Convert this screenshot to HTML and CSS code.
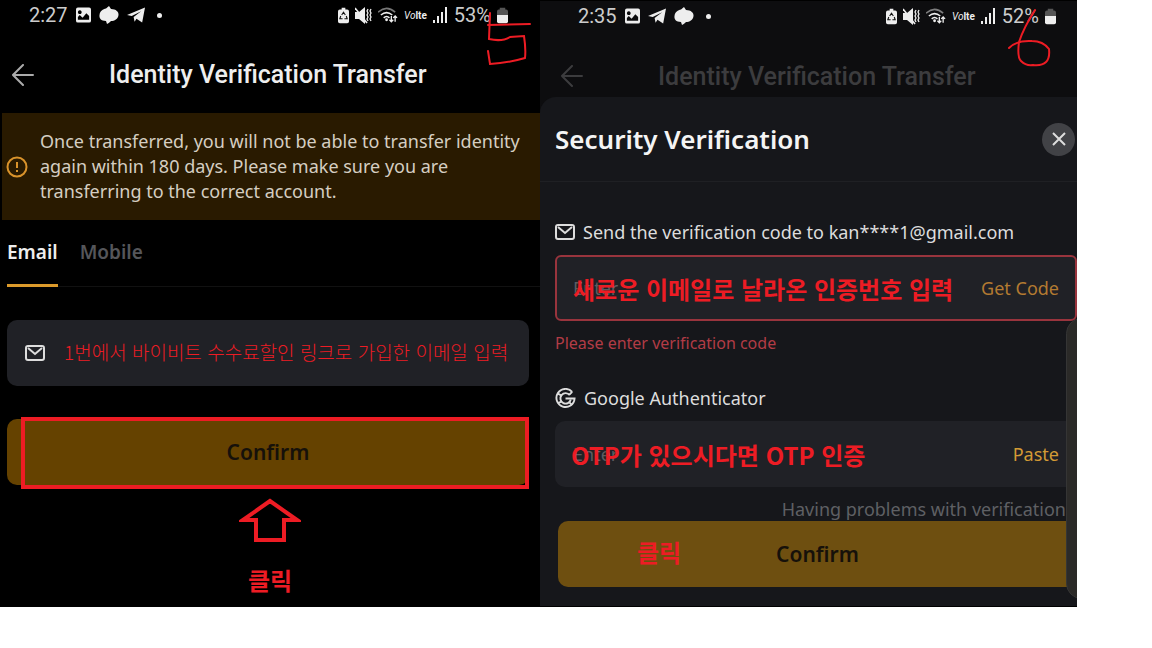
FILE: index.html
```
<!DOCTYPE html>
<html lang="ko">
<head>
  <meta charset="UTF-8" />
  <meta name="viewport" content="width=device-width, initial-scale=1.0"/>
  <title>Identity Verification Transfer</title>
  <link rel="stylesheet" href="styles.css">
</head>
<body>

  <!-- Shared icons -->
  <svg class="sprite" aria-hidden="true">
    <symbol id="picture" viewBox="0 0 16 16">
      <path fill="currentColor" fill-rule="evenodd" d="M2 0h12a2 2 0 0 1 2 2v12a2 2 0 0 1-2 2H2a2 2 0 0 1-2-2V2a2 2 0 0 1 2-2zM2 13h12V9l-3-3-4 5-3-3-2 2zM4 3a2 2 0 1 0 .1 0z"/>
    </symbol>
    <symbol id="blob" viewBox="0 0 20 18">
      <path fill="currentColor" d="M10 0l2 3c5 0 8 3 7.500 6-.5 4-4 6-7.500 6-1 1-2 2-4 3l-1-3C2 15 0 12 .5 9 1 5 4 3 7 2.500z"/>
    </symbol>
    <symbol id="plane" viewBox="0 0 19 16">
      <path fill="currentColor" d="M0 8L19 0l-3 16-6-4-2 3-1-5 8-6-10 5z"/>
    </symbol>
    <symbol id="saver" viewBox="0 0 12 17">
      <path fill="currentColor" d="M4 0h4v2h2a2 2 0 0 1 2 2v11a2 2 0 0 1-2 2H2a2 2 0 0 1-2-2V4a2 2 0 0 1 2-2h2z"/>
      <path fill="none" stroke="#111" stroke-width="1.200" d="M4 8l2-3 2 3M9 9l1 3H7M5 12H2l1-3"/>
    </symbol>
    <symbol id="mute" viewBox="0 0 17 17">
      <path fill="currentColor" d="M0 5h4l6-5v17l-6-5H0z"/>
      <path stroke="currentColor" stroke-width="1.600" d="M0 1l12 15"/>
      <path fill="none" stroke="currentColor" stroke-width="1.300" d="M13 2l-1 2 1 2-1 2 1 2-1 2 1 2M16 2l-1 2 1 2-1 2 1 2-1 2 1 2"/>
    </symbol>
    <symbol id="wifi" viewBox="0 0 21 17">
      <g fill="none" stroke="currentColor" stroke-width="1.600">
        <path stroke-opacity=".5" d="M0 5q9-8 18 0"/>
        <path d="M3 8q6-5 12 0M6 11q3-3 6 0"/>
        <path stroke-width="1.400" d="M14 9v6M12 13l2 2 2-2M18 15V9M16 11l2-2 2 2"/>
      </g>
      <circle cx="9" cy="13" r="1.500" fill="currentColor"/>
    </symbol>
    <symbol id="signal" viewBox="0 0 15 16">
      <path fill="currentColor" d="M0 13h2v3H0zM4 9h2v7H4zM8 5h2v11H8zM12 0h2v16h-2z"/>
    </symbol>
    <symbol id="battery" viewBox="0 0 12 17">
      <path fill="#555" d="M3 0h6v2h1a2 2 0 0 1 2 2v5H0V4a2 2 0 0 1 2-2h1z"/>
      <path fill="currentColor" d="M0 8h12v7a2 2 0 0 1-2 2H2a2 2 0 0 1-2-2z"/>
    </symbol>
    <symbol id="back" viewBox="0 0 22 22">
      <path fill="none" stroke="currentColor" stroke-width="2" stroke-linecap="round" d="M21 11H1M11 1L1 11l10 10"/>
    </symbol>
    <symbol id="mail" viewBox="0 0 20 16">
      <rect x="1" y="1" width="18" height="14" rx="2" fill="none" stroke="currentColor" stroke-width="2"/>
      <path fill="none" stroke="currentColor" stroke-width="2" d="M3 3l7 6 7-6"/>
    </symbol>
  </svg>

  <main class="board">

    <!-- Step 5 -->
    <section class="phone first">
      <div class="status">
        <span class="time">2:27</span>
        <svg class="icon-picture"><use href="#picture"/></svg>
        <svg class="icon-blob"><use href="#blob"/></svg>
        <svg class="icon-plane"><use href="#plane"/></svg>
        <span class="dot"></span>
        <div class="status-right">
          <svg class="icon-saver"><use href="#saver"/></svg>
          <svg class="icon-mute"><use href="#mute"/></svg>
          <svg class="icon-wifi"><use href="#wifi"/></svg>
          <span class="volte"><i>Vo</i>lte</span>
          <svg class="icon-signal"><use href="#signal"/></svg>
          <span class="percent">53%</span>
          <svg class="icon-saver"><use href="#battery"/></svg>
        </div>
      </div>

      <header class="topbar">
        <button class="back" aria-label="Back"><svg><use href="#back"/></svg></button>
        <h1>Identity Verification Transfer</h1>
      </header>

      <div class="notice">
        <svg viewBox="0 0 22 22">
          <circle cx="11" cy="11" r="9.500" fill="none" stroke="#d9932b" stroke-width="2"/>
          <path stroke="#d9932b" stroke-width="2" d="M11 6v6M11 14v2"/>
        </svg>
        <p>Once transferred, you will not be able to transfer identity again within 180 days. Please make sure you are transferring to the correct account.</p>
      </div>

      <nav class="tabs">
        <button class="active">Email</button>
        <button>Mobile</button>
      </nav>

      <div class="field email">
        <svg class="icon-mail"><use href="#mail"/></svg>
        <input type="email" aria-label="Email" />
        <span class="note thin">1번에서 바이비트 수수료할인 링크로 가입한 이메일 입력</span>
      </div>

      <div class="confirm-wrap">
        <button class="confirm">Confirm</button>
        <span class="frame"></span>
      </div>

      <div class="pointer">
        <svg viewBox="0 0 62 46">
          <path fill="none" stroke="#ed1c24" stroke-width="4" d="M31 3L4 22h13v20h28V22h13z"/>
        </svg>
        <span class="mark">클릭</span>
      </div>

      <svg class="number" viewBox="0 0 48 70">
        <path d="M6 13L5 39Q18 42 26 37L40 36Q42 49 41 58Q24 63 6 64L4 51M4 25L46 24"/>
      </svg>
    </section>

    <!-- Step 6 -->
    <section class="phone second">
      <div class="status">
        <span class="time">2:35</span>
        <svg class="icon-picture"><use href="#picture"/></svg>
        <svg class="icon-plane"><use href="#plane"/></svg>
        <svg class="icon-blob"><use href="#blob"/></svg>
        <span class="dot"></span>
        <div class="status-right">
          <svg class="icon-saver"><use href="#saver"/></svg>
          <svg class="icon-mute"><use href="#mute"/></svg>
          <svg class="icon-wifi"><use href="#wifi"/></svg>
          <span class="volte"><i>Vo</i>lte</span>
          <svg class="icon-signal"><use href="#signal"/></svg>
          <span class="percent">52%</span>
          <svg class="icon-saver"><use href="#battery"/></svg>
        </div>
      </div>

      <header class="topbar">
        <button class="back" aria-label="Back"><svg><use href="#back"/></svg></button>
        <h1>Identity Verification Transfer</h1>
      </header>

      <div class="sheet">
        <div class="sheet-head">
          <h2>Security Verification</h2>
          <button class="close" aria-label="Close">
            <svg viewBox="0 0 14 14"><path stroke="currentColor" stroke-width="2" d="M1 1l12 12M13 1L1 13"/></svg>
          </button>
        </div>

        <div class="sheet-body">
          <label class="caption" for="code">
            <svg class="icon-mail"><use href="#mail"/></svg>
            Send the verification code to kan****1@gmail.com
          </label>
          <div class="field error">
            <input type="text" id="code" placeholder="Enter" />
            <button class="link dim">Get Code</button>
            <span class="note">새로운 이메일로 날라온 인증번호 입력</span>
          </div>
          <p class="message">Please enter verification code</p>

          <label class="caption" for="otp">
            <svg class="icon-google" viewBox="0 0 22 22">
              <g fill="none" stroke="currentColor">
                <path stroke-width="2" d="M18 4A9.500 9.500 0 1 0 20.500 11H11"/>
                <path stroke-width="2" d="M15.500 7.500A5.500 5.500 0 1 0 16.500 12"/>
                <path stroke-width="2" d="M3 6l4 2M3 16l4-2M15 15l3 3M18 4l-3 3"/>
              </g>
            </svg>
            Google Authenticator
          </label>
          <div class="field otp">
            <input type="text" id="otp" placeholder="Enter" />
            <button class="link">Paste</button>
            <span class="note">OTP가 있으시다면 OTP 인증</span>
          </div>
          <a class="help" href="#">Having problems with verification</a>
          <div class="confirm-wrap">
            <button class="confirm">Confirm</button>
            <span class="mark">클릭</span>
          </div>
        </div>
      </div>

      <span class="edge-panel"></span>
      <svg class="number" viewBox="0 0 48 70">
        <path d="M30 9Q19 26 14 41Q12 56 16 60Q21 65 28 64Q37 65 41 61Q45 57 44 48Q38 40 27 40Q12 39 4 47"/>
      </svg>
    </section>

  </main>

</body>
</html>
```
FILE: styles.css
```
* {
  box-sizing: border-box;
}

body {
  margin: 0;
  background: #fff;
  font-family: "Noto Sans", "Noto Sans CJK KR", sans-serif;
  color: #ddd;
}

h1, h2, p {
  margin: 0;
}

button, input {
  font: inherit;
  color: inherit;
  background: none;
  border: none;
  padding: 0;
}

button {
  cursor: pointer;
}

svg {
  display: block;
  flex: none;
}

.sprite {
  position: absolute;
  width: 0;
  height: 0;
}

.board {
  display: grid;
  grid-template-columns: 540fr 537fr;
  margin-right: 75px;
  background: #000;
}

.phone {
  position: relative;
  overflow: hidden;
  min-width: 0;
  padding-bottom: 8px;
}

/* Status bar */
.status {
  display: flex;
  align-items: center;
  gap: 8px;
  height: 30px;
  padding: 0 32px 0 29px;
  font-family: Roboto, sans-serif;
  font-size: 20px;
  color: #eee;
}

.time, .percent {
  color: #ccc;
}

.status-right {
  display: flex;
  align-items: center;
  gap: 6px;
  margin-left: auto;
}

.volte {
  font-size: 10px;
  font-weight: bold;
}

.volte i {
  font-weight: normal;
}

.dot {
  width: 5px;
  height: 5px;
  margin-left: 4px;
  border-radius: 50%;
  background: #eee;
}

.icon-picture {
  width: 15px;
  height: 16px;
}

.icon-blob {
  width: 20px;
  height: 18px;
}

.icon-plane {
  width: 18px;
  height: 16px;
}

.icon-saver {
  width: 11px;
  height: 17px;
}

.icon-mute {
  width: 17px;
  height: 17px;
}

.icon-wifi {
  width: 20px;
  height: 17px;
}

.icon-signal {
  width: 15px;
  height: 16px;
}

.icon-mail {
  width: 20px;
  height: 16px;
}

.icon-google {
  width: 21px;
  height: 21px;
}

/* Top bar */
.topbar {
  display: flex;
  align-items: center;
  height: 83px;
  padding: 6px 12px 0;
}

.topbar h1 {
  margin-left: 75px;
  font-family: Roboto, sans-serif;
  font-size: 25px;
  font-weight: 500;
  color: #eee;
  white-space: nowrap;
}

.back {
  color: #aaa;
}

.back svg {
  width: 22px;
  height: 22px;
}

.notice {
  display: flex;
  align-items: center;
  gap: 12px;
  height: 107px;
  margin-left: 2px;
  padding: 0 8px 0 4px;
  background: #291a00;
}

.notice svg {
  width: 22px;
  height: 22px;
}

.notice p {
  font-size: 18px;
  line-height: 25px;
  color: #d5cec2;
}

/* Tabs */
.tabs {
  display: flex;
  gap: 22px;
  height: 67px;
  margin-left: 7px;
  border-bottom: 1px solid #111;
}

.tabs button {
  margin-bottom: -1px;
  border-bottom: 3px solid transparent;
  font-size: 19px;
  font-weight: 600;
  color: #55565a;
}

.tabs .active {
  color: #eee;
  border-color: #dc9a2b;
}

/* Fields */
.field {
  position: relative;
  display: flex;
  align-items: center;
  height: 66px;
  padding: 0 18px;
  border-radius: 10px;
  background: #202126;
  font-size: 18px;
}

.field input {
  flex: 1;
  min-width: 0;
  height: 100%;
  outline: none;
}

.field input::placeholder {
  color: #5c5d61;
  opacity: 1;
}

.email {
  gap: 12px;
  margin: 33px 11px 33px 7px;
}

.note, .mark {
  color: #ed1c24;
  font-family: "Noto Sans CJK KR", sans-serif;
  font-size: 24px;
  font-weight: 700;
  white-space: nowrap;
}

.note {
  position: absolute;
  left: 18px;
  pointer-events: none;
}

.thin {
  left: 57px;
  padding-bottom: 4px;
  font-size: 19px;
  font-weight: 300;
}

.confirm-wrap {
  position: relative;
}

.confirm {
  display: block;
  width: 100%;
  height: 66px;
  border-radius: 10px;
  background: #654200;
  color: #16110a;
  font-size: 21px;
  font-weight: 600;
}

.first .confirm-wrap {
  margin: 0 11px 0 7px;
}

.frame {
  position: absolute;
  inset: -2px 0 -4px 14px;
  border: 4px solid #ed1c24;
  pointer-events: none;
}

.pointer {
  display: flex;
  flex-direction: column;
  align-items: center;
  gap: 18px;
  margin-top: 13px;
}

.pointer svg {
  width: 62px;
  height: 46px;
}

.number {
  position: absolute;
  top: 0;
  right: 8px;
  width: 48px;
  height: 70px;
  fill: none;
  stroke: #ed1c24;
  stroke-width: 2;
  stroke-linecap: round;
}

/* Second phone with the sheet opened */
.second {
  border-top: 1px solid #000;
  background: #0d0d0f;
  padding-bottom: 0;
}

.second .status {
  padding: 0 21px 0 38px;
}

.second .topbar {
  height: 66px;
  padding: 24px 21px 0;
}

.second .topbar h1, .second .back {
  color: #3c3c3e;
}

.second .number {
  right: 24px;
}

.sheet {
  border-bottom: 1px solid #000;
  border-radius: 16px 0 0 0;
  background: #16171b;
}

.sheet-head {
  display: flex;
  align-items: center;
  justify-content: space-between;
  height: 85px;
  padding: 0 2px 0 15px;
  border-bottom: 1px solid #1f2024;
}

.sheet-head h2 {
  font-size: 26px;
  font-weight: 600;
  color: #f4f4f4;
}

.close {
  display: grid;
  place-items: center;
  width: 33px;
  height: 33px;
  border-radius: 50%;
  background: #414246;
}

.close svg {
  width: 14px;
  height: 14px;
}

.sheet-body {
  padding: 36px 0 19px 15px;
}

.caption {
  display: flex;
  align-items: center;
  gap: 8px;
  height: 28px;
  margin-bottom: 9px;
  font-size: 18px;
}

.error {
  border: 2px solid #99343d;
  border-radius: 6px;
  padding: 0 16px;
}

.error .note {
  left: 16px;
}

.otp .note {
  left: 16px;
}

.link {
  color: #d39a35;
}

.dim {
  color: #b37a31;
}

.message {
  margin: 11px 0 30px;
  font-size: 16px;
  line-height: 22px;
  color: #b23c46;
}

.help {
  display: block;
  height: 34px;
  padding: 9px 11px 0 0;
  font-size: 18px;
  line-height: 26px;
  text-align: right;
  text-decoration: none;
  color: #5f6064;
}

.second .confirm-wrap {
  margin-left: 3px;
}

.second .confirm {
  border-radius: 10px 0 0 10px;
  background: #6e4f10;
}

.second .mark {
  position: absolute;
  top: 13px;
  left: 79px;
}

.edge-panel {
  position: absolute;
  top: 317px;
  right: -20px;
  width: 31px;
  height: 281px;
  border: 1px solid #353535;
  border-radius: 18px;
  background: #2b2a28;
}
```
